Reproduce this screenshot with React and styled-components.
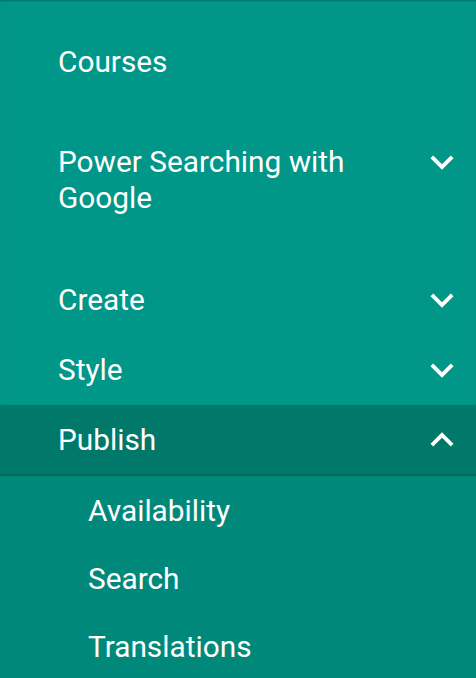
import React from 'react'
import styled, { createGlobalStyle } from 'styled-components'
import { MdExpandMore, MdExpandLess } from 'react-icons/md'

const GlobalStyle = createGlobalStyle`
  html, body {
    margin: 0;
    padding: 0;
    background: #009688;
  }
  body {
    font-family: Roboto, "Noto Sans", sans-serif;
    -webkit-font-smoothing: antialiased;
  }
`;

const Drawer = styled.nav`
  width: 476px;
  height: 678px;
  overflow: hidden;
  background: #009688;
  color: #fff;
  box-shadow: inset 0 2px 2px -1px rgba(0, 0, 0, 0.25);
`;

const Title = styled.div`
  height: 124px;
  display: flex;
  align-items: center;
  padding-left: 58px;
  font-size: 29.8px;
  line-height: 36px;
`;

/* Ligne du menu, avec ou sans sous-menu */

const Row = styled.div`
  display: flex;
  align-items: ${p => (p.$tall ? 'flex-start' : 'center')};
  justify-content: space-between;
  box-sizing: border-box;
  height: ${p => p.$height}px;
  padding: ${p => (p.$tall ? '20px' : '0')} 11px 0 58px;
  background: ${p => (p.$open ? '#00796b' : 'transparent')};
  border-bottom: ${p => (p.$open ? '2px solid #00695c' : 'none')};
`;

const Label = styled.span`
  font-size: 29.8px;
  line-height: 36px;
  max-width: 320px;
`;

const Chevron = styled.span`
  display: flex;
  width: 46px;
  height: 36px;
  align-items: center;
  justify-content: center;
  svg {
    display: block;
  }
`;

const SubMenu = styled.div`
  background: #00897b;
`;

const SubItem = styled.div`
  height: 68px;
  display: flex;
  align-items: center;
  padding-left: 88px;
  font-size: 29.8px;
`;

const items = [
  { label: 'Power Searching with Google', height: 141, tall: true },
  { label: 'Create', height: 70 },
  { label: 'Style', height: 70 },
]

const App = () => {
  return (
    <>
      <GlobalStyle />
      <Drawer>
        <Title>Courses</Title>
        {items.map(item => (
          <Row key={item.label} $height={item.height} $tall={item.tall}>
            <Label>{item.label}</Label>
            <Chevron><MdExpandMore size={46} /></Chevron>
          </Row>
        ))}
        <Row $height={71} $open>
          <Label>Publish</Label>
          <Chevron><MdExpandLess size={46} /></Chevron>
        </Row>
        <SubMenu>
          <SubItem>Availability</SubItem>
          <SubItem>Search</SubItem>
          <SubItem>Translations</SubItem>
        </SubMenu>
      </Drawer>
    </>
  )
}

export default App
